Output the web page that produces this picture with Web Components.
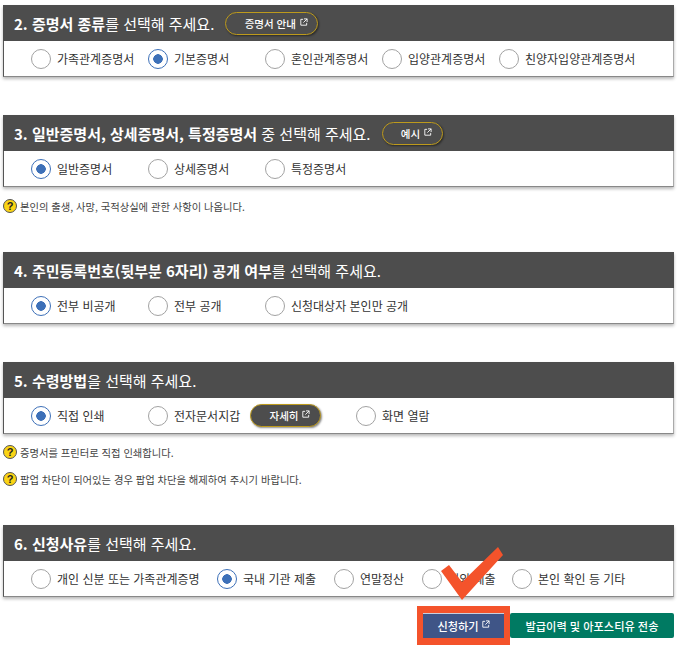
<!DOCTYPE html>
<html lang="ko">
<head>
<meta charset="utf-8">
<style>
  html, body { margin: 0; background: #fff; }
  body { font-family: "Noto Sans CJK KR", "Noto Sans", sans-serif; width: 680px; height: 646px; overflow: hidden; }
  su-panel { margin: 0 6px 0 3px; }
  b { font-weight: 700; }
</style>
</head>
<body>
<script>
const linkIcon = (size) => `
  <svg viewBox="0 0 9 9" width="${size}" height="${size}" fill="none" stroke="currentColor">
    <path d="M3.5 1.5H.9v6.6h6.6V5.5M4.5 1h3.5v3.5M8 1L3.8 5.2"/>
  </svg>`;

class SuPanel extends HTMLElement {
  connectedCallback() {
    this.attachShadow({ mode: "open" });
    this.shadowRoot.innerHTML = `
      <style>
        :host { display: block; box-shadow: 0 2px 3px rgba(0,0,0,.28); }
        header {
          display: flex;
          align-items: center;
          gap: 11px;
          height: 36px;
          padding-left: 11px;
          background: #4d4d4d;
          color: #fff;
          font-size: 15px;
          white-space: nowrap;
        }
        .options {
          display: flex;
          align-items: center;
          box-sizing: border-box;
          height: 36px;
          padding-left: 27px;
          background: #fff;
          border-left: 1px solid #555;
          border-right: 1px solid #aaa;
          border-bottom: 1px solid #888;
        }
      </style>
      <header><span><slot name="title"></slot></span><slot name="action"></slot></header>
      <div class="options"><slot></slot></div>
    `;
  }
}

class SuRadio extends HTMLElement {
  connectedCallback() {
    this.attachShadow({ mode: "open" });
    const width = this.getAttribute("width") || "117";
    this.shadowRoot.innerHTML = `
      <style>
        :host { display: block; flex: none; width: ${width}px; }
        label { display: flex; align-items: center; gap: 6px; font-size: 12px; color: #333; white-space: nowrap; }
        i { box-sizing: border-box; width: 20px; height: 20px; border-radius: 50%; border: 1.5px solid #a2a2a2; background: #fff; flex: none; }
        :host([checked]) i {
          border-color: #3d70b8;
          background: radial-gradient(circle, #3d70b8 0 4.5px, #fff 5px);
        }
      </style>
      <label><i></i><span><slot></slot></span></label>
    `;
  }
}

class SuPill extends HTMLElement {
  connectedCallback() {
    this.attachShadow({ mode: "open" });
    this.shadowRoot.innerHTML = `
      <style>
        :host {
          display: inline-flex;
          align-items: center;
          justify-content: center;
          gap: 4px;
          flex: none;
          box-sizing: border-box;
          height: 23px;
          padding-left: 9px;
          border: 1px solid #bd9a1c;
          border-radius: 12px;
          background: #4d4d4d;
          color: #fff;
          font-size: 10.5px;
          font-weight: 500;
          box-shadow: 1px 1px 2px rgba(0,0,0,.45);
        }
        svg { display: block; margin-top: -3px; }
      </style>
      <slot></slot>${linkIcon(8)}
    `;
  }
}

class SuNote extends HTMLElement {
  connectedCallback() {
    this.attachShadow({ mode: "open" });
    this.shadowRoot.innerHTML = `
      <style>
        :host { display: flex; align-items: center; gap: 3px; margin-left: 3px; height: 14px; font-size: 10.3px; color: #444; white-space: nowrap; }
        i {
          box-sizing: border-box; width: 14px; height: 14px; border-radius: 50%;
          background: #fbd414; border: 1px solid #555;
          color: #222; font: 700 11px/12px "Liberation Sans", sans-serif; text-align: center;
        }
      </style>
      <i>?</i><span><slot></slot></span>
    `;
  }
}

class SuButton extends HTMLElement {
  connectedCallback() {
    this.attachShadow({ mode: "open" });
    const primary = this.getAttribute("kind") === "primary";
    this.shadowRoot.innerHTML = `
      <style>
        :host {
          display: flex;
          align-items: center;
          justify-content: center;
          gap: 3px;
          flex: none;
          box-sizing: border-box;
          height: 25px;
          color: #fff;
          font-size: 11.2px;
          font-weight: 500;
          white-space: nowrap;
        }
        :host([kind="primary"]) { width: 81px; background: #3f5587; border-top: 1px solid #c9cfdd; }
        :host([kind="green"]) { width: 164px; background: #007a62; border-radius: 2px; }
        svg { display: block; margin-top: -4px; }
      </style>
      <slot></slot>${primary ? linkIcon(8) : ""}
    `;
  }
}

class SuActions extends HTMLElement {
  connectedCallback() {
    this.attachShadow({ mode: "open" });
    this.shadowRoot.innerHTML = `
      <style>
        :host { display: flex; justify-content: flex-end; align-items: center; position: relative; margin: 9px 6px 0 0; height: 39px; }
        .mark { box-sizing: border-box; display: flex; padding: 7px 6px 6px; width: 93px; height: 39px; background: #f4532b; }
        svg { position: absolute; right: 170px; top: -60px; }
      </style>
      <div class="mark"><slot name="primary"></slot></div>
      <slot></slot>
      <svg width="64" height="56" viewBox="0 0 64 56"><polygon fill="#f4532b" points="1,25 9,19 22,36 58,1 63,9 22,54"/></svg>
    `;
  }
}

customElements.define("su-panel", SuPanel);
customElements.define("su-radio", SuRadio);
customElements.define("su-pill", SuPill);
customElements.define("su-note", SuNote);
customElements.define("su-button", SuButton);
customElements.define("su-actions", SuActions);
</script>

<su-panel style="margin-top:5px">
  <span slot="title"><b>2. 증명서 종류</b>를 선택해 주세요.</span>
  <su-pill slot="action" style="width:93px">증명서 안내</su-pill>
  <su-radio>가족관계증명서</su-radio>
  <su-radio checked>기본증명서</su-radio>
  <su-radio>혼인관계증명서</su-radio>
  <su-radio>입양관계증명서</su-radio>
  <su-radio>친양자입양관계증명서</su-radio>
</su-panel>

<su-panel style="margin-top:38px">
  <span slot="title"><b>3. 일반증명서, 상세증명서, 특정증명서</b> 중 선택해 주세요.</span>
  <su-pill slot="action" style="width:61px">예시</su-pill>
  <su-radio checked>일반증명서</su-radio>
  <su-radio>상세증명서</su-radio>
  <su-radio>특정증명서</su-radio>
</su-panel>
<su-note style="margin-top:12px">본인의 출생, 사망, 국적상실에 관한 사항이 나옵니다.</su-note>

<su-panel style="margin-top:39px">
  <span slot="title"><b>4. 주민등록번호(뒷부분 6자리) 공개 여부</b>를 선택해 주세요.</span>
  <su-radio checked>전부 비공개</su-radio>
  <su-radio>전부 공개</su-radio>
  <su-radio>신청대상자 본인만 공개</su-radio>
</su-panel>

<su-panel style="margin-top:38px">
  <span slot="title"><b>5. 수령방법</b>을 선택해 주세요.</span>
  <su-radio checked>직접 인쇄</su-radio>
  <su-radio width="102">전자문서지갑</su-radio>
  <su-pill style="width:71px;margin-right:35px">자세히</su-pill>
  <su-radio>화면 열람</su-radio>
</su-panel>
<su-note style="margin-top:11px">증명서를 프린터로 직접 인쇄합니다.</su-note>
<su-note style="margin-top:13px">팝업 차단이 되어있는 경우 팝업 차단을 해제하여 주시기 바랍니다.</su-note>

<su-panel style="margin-top:39px">
  <span slot="title"><b>6. 신청사유</b>를 선택해 주세요.</span>
  <su-radio width="186">개인 신분 또는 가족관계증명</su-radio>
  <su-radio width="117" checked>국내 기관 제출</su-radio>
  <su-radio width="88">연말정산</su-radio>
  <su-radio width="90">해외 제출</su-radio>
  <su-radio>본인 확인 등 기타</su-radio>
</su-panel>

<su-actions>
  <su-button slot="primary" kind="primary">신청하기</su-button>
  <su-button kind="green">발급이력 및 아포스티유 전송</su-button>
</su-actions>
</body>
</html>
